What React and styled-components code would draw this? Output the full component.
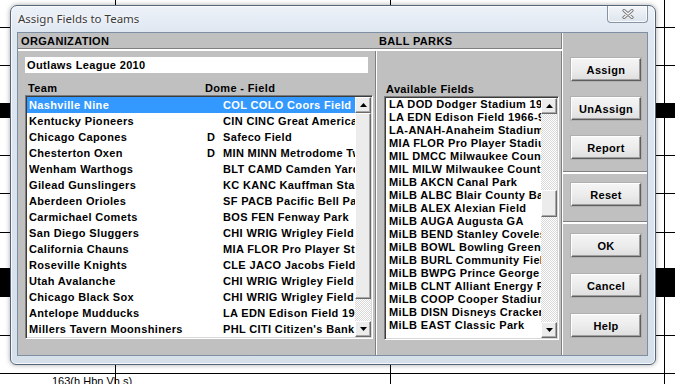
import React from "react";
import styled, { createGlobalStyle } from "styled-components";

const GlobalStyle = createGlobalStyle`
  html, body {
    margin: 0;
    padding: 0;
    background: #fff;
  }
  body {
    width: 675px;
    height: 384px;
    overflow: hidden;
    font-family: "Liberation Sans", Arial, sans-serif;
  }
`;

const teams = [
  { name: "Nashville Nine", dome: "", field: "COL COLO Coors Field", selected: true },
  { name: "Kentucky Pioneers", dome: "", field: "CIN CINC Great American Ball Park" },
  { name: "Chicago Capones", dome: "D", field: "Safeco Field" },
  { name: "Chesterton Oxen", dome: "D", field: "MIN MINN Metrodome Twins" },
  { name: "Wenham Warthogs", dome: "", field: "BLT CAMD Camden Yards" },
  { name: "Gilead Gunslingers", dome: "", field: "KC KANC Kauffman Stadium" },
  { name: "Aberdeen Orioles", dome: "", field: "SF PACB Pacific Bell Park" },
  { name: "Carmichael Comets", dome: "", field: "BOS FEN Fenway Park" },
  { name: "San Diego Sluggers", dome: "", field: "CHI WRIG Wrigley Field" },
  { name: "California Chauns", dome: "", field: "MIA FLOR Pro Player Stadium" },
  { name: "Roseville Knights", dome: "", field: "CLE JACO Jacobs Field" },
  { name: "Utah Avalanche", dome: "", field: "CHI WRIG Wrigley Field" },
  { name: "Chicago Black Sox", dome: "", field: "CHI WRIG Wrigley Field" },
  { name: "Antelope Mudducks", dome: "", field: "LA EDN Edison Field 1966-97" },
  { name: "Millers Tavern Moonshiners", dome: "", field: "PHL CITI Citizen's Bank Park" },
];

const parks = [
  "LA DOD Dodger Stadium 1962-",
  "LA EDN Edison Field 1966-97",
  "LA-ANAH-Anaheim Stadium",
  "MIA FLOR Pro Player Stadium",
  "MIL DMCC Milwaukee County Stadium",
  "MIL MILW Milwaukee County Stadium",
  "MiLB AKCN Canal Park",
  "MiLB ALBC Blair County Ballpark",
  "MiLB ALEX Alexian Field",
  "MiLB AUGA Augusta GA",
  "MiLB BEND Stanley Coveleski",
  "MiLB BOWL Bowling Green",
  "MiLB BURL Community Field",
  "MiLB BWPG Prince George",
  "MiLB CLNT Alliant Energy Field",
  "MiLB COOP Cooper Stadium",
  "MiLB DISN Disneys Cracker Jack",
  "MiLB EAST Classic Park",
];

// lines of the sheet lying behind the dialog
const hLines = [27, 65, 155, 193, 232, 335, 373];
const vLines = [115, 390, 664];

const Arrow = ({ down }) => (
  <svg width="7" height="4" viewBox="0 0 7 4">
    {down ? <polygon points="0,0 7,0 3.5,4" fill="#000" /> : <polygon points="0,4 7,4 3.5,0" fill="#000" />}
  </svg>
);

const CloseIcon = () => (
  <svg width="12" height="10" viewBox="0 0 12 10">
    <path d="M2 1.5 L10 8.5 M10 1.5 L2 8.5" stroke="#7a7a7a" strokeWidth="3.2" strokeLinecap="round" />
    <path d="M2 1.5 L10 8.5 M10 1.5 L2 8.5" stroke="#fafafa" strokeWidth="1.3" strokeLinecap="round" />
  </svg>
);

const ScrollBar = ({ before, thumb }) => (
  <Bar>
    <ArrowButton>
      <Arrow />
    </ArrowButton>
    <Track>
      <TrackGap $h={before} />
      <Thumb $h={thumb} />
    </Track>
    <ArrowButton>
      <Arrow down />
    </ArrowButton>
  </Bar>
);

const App = () => {
  return (
    <Page>
      <GlobalStyle />
      {hLines.map((y) => (
        <HLine key={y} $y={y} />
      ))}
      {vLines.map((x) => (
        <VLine key={x} $x={x} />
      ))}
      <Block $left={0} $y={103} $h={15} $w={10} />
      <Block $left={0} $y={268} $h={29} $w={10} />
      <Block $left={656} $y={103} $h={15} $w={19} />
      <Block $left={656} $y={268} $h={29} $w={19} />
      <SheetText>163(h Hbn Vh s)</SheetText>

      <Window>
        <TitleBar>
          <Title>Assign Fields to Teams</Title>
          <CloseButton>
            <CloseIcon />
          </CloseButton>
        </TitleBar>

        <Client>
          <Main>
            <HeaderRow>
              <HeaderCell $w={359} $pad={3}>ORGANIZATION</HeaderCell>
              <HeaderCell $pad={2}>BALL PARKS</HeaderCell>
            </HeaderRow>
            <Body>
              <OrgPanel>
                <OrgInput>Outlaws League 2010</OrgInput>
                <ColumnLabels>
                  <Label $w={175}>Team</Label>
                  <Label>Dome - Field</Label>
                </ColumnLabels>
                <ListBox $w={348}>
                  <Rows>
                    {teams.map((t) => (
                      <TeamRow key={t.name} $selected={t.selected}>
                        <Cell>{t.name}</Cell>
                        <Cell>{t.dome}</Cell>
                        <Cell>{t.field}</Cell>
                      </TeamRow>
                    ))}
                  </Rows>
                  <ScrollBar before={0} thumb={186} />
                </ListBox>
              </OrgPanel>

              <ParksPanel>
                <Label>Available Fields</Label>
                <ListBox $w={175}>
                  <Rows>
                    {parks.map((p) => (
                      <ParkRow key={p}>{p}</ParkRow>
                    ))}
                  </Rows>
                  <ScrollBar before={76} thumb={27} />
                </ListBox>
              </ParksPanel>
            </Body>
          </Main>

          <ButtonColumn>
            <ButtonGroup $h={139} $top={25} $gap={16}>
              <Button>Assign</Button>
              <Button>UnAssign</Button>
              <Button>Report</Button>
            </ButtonGroup>
            <ButtonGroup $h={50} $top={10} $gap={0} $divided>
              <Button>Reset</Button>
            </ButtonGroup>
            <ButtonGroup $top={11} $gap={17} $divided $grow>
              <Button>OK</Button>
              <Button>Cancel</Button>
              <Button>Help</Button>
            </ButtonGroup>
          </ButtonColumn>
        </Client>
      </Window>
    </Page>
  );
};

const Page = styled.div`
  position: relative;
  width: 675px;
  height: 384px;
  overflow: hidden;
  background: #fff;
`;

const HLine = styled.div`
  position: absolute;
  left: 0;
  right: 0;
  top: ${(p) => p.$y}px;
  height: 1px;
  background: #000;
`;

const VLine = styled.div`
  position: absolute;
  top: 0;
  bottom: 0;
  left: ${(p) => p.$x}px;
  width: 1px;
  background: #000;
`;

const Block = styled.div`
  position: absolute;
  left: ${(p) => p.$left}px;
  top: ${(p) => p.$y}px;
  width: ${(p) => p.$w}px;
  height: ${(p) => p.$h}px;
  background: #000;
`;

const SheetText = styled.div`
  position: absolute;
  left: 52px;
  top: 375px;
  font-size: 11px;
  color: #000;
  white-space: nowrap;
`;

const Window = styled.div`
  position: absolute;
  left: 10px;
  top: 5px;
  width: 646px;
  height: 360px;
  box-sizing: border-box;
  display: flex;
  flex-direction: column;
  border: 1px solid #56667a;
  border-radius: 7px 7px 6px 6px;
  background: linear-gradient(180deg, #edf2f8 0px, #dfe7f1 26px, #d6e0eb 100%);
  box-shadow: inset 0 0 0 1px rgba(255, 255, 255, 0.75), 0 0 5px rgba(0, 0, 0, 0.35);
`;

const TitleBar = styled.div`
  height: 26px;
  flex: none;
  display: flex;
  align-items: flex-start;
  justify-content: space-between;
  padding: 0 7px 0 7px;
`;

const Title = styled.div`
  margin-top: 5px;
  font-family: "Noto Sans", "Open Sans", sans-serif;
  font-size: 11.5px;
  line-height: 16px;
  color: #3a3a3a;
  text-shadow: 0 0 6px #fff, 0 0 3px #fff;
`;

const CloseButton = styled.div`
  width: 41px;
  height: 17px;
  box-sizing: border-box;
  display: flex;
  align-items: center;
  justify-content: center;
  border: 1px solid #8593a5;
  border-top: none;
  border-radius: 0 0 4px 4px;
  background: linear-gradient(180deg, #f3f6fa, #dde4ed);
  box-shadow: inset 0 0 0 1px rgba(255, 255, 255, 0.8);
`;

const Client = styled.div`
  flex: 1;
  display: flex;
  margin: 0 7px 8px 6px;
  border: 1px solid #7e8ea3;
  background: #c0c0c0;
  font-weight: 700;
  font-size: 11px;
  letter-spacing: 0.35px;
  color: #000;
`;

const Main = styled.div`
  width: 545px;
  box-sizing: border-box;
  display: flex;
  flex-direction: column;
  border-right: 1px solid #fff;
  box-shadow: inset -1px 0 0 #808080;
`;

const HeaderRow = styled.div`
  height: 16px;
  display: flex;
  align-items: center;
  border-bottom: 1px solid #fff;
  box-shadow: 0 1px 0 #fff, inset 0 -1px 0 #808080;
  margin-bottom: 1px;
`;

const HeaderCell = styled.div`
  width: ${(p) => (p.$w ? `${p.$w}px` : "auto")};
  padding-left: ${(p) => p.$pad}px;
  box-sizing: border-box;
  line-height: 16px;
`;

const Body = styled.div`
  flex: 1;
  display: flex;
`;

const OrgPanel = styled.div`
  width: 359px;
  box-sizing: border-box;
  padding: 6px 0 0 7px;
  border-right: 1px solid #fff;
  box-shadow: inset -1px 0 0 #808080;
  display: flex;
  flex-direction: column;
`;

const ParksPanel = styled.div`
  flex: 1;
  padding: 32px 0 0 7px;
  display: flex;
  flex-direction: column;
`;

const OrgInput = styled.div`
  width: 343px;
  height: 16px;
  box-sizing: border-box;
  padding-left: 2px;
  line-height: 16px;
  background: #fff;
`;

const ColumnLabels = styled.div`
  height: 22px;
  display: flex;
  align-items: flex-end;
  padding-left: 3px;
`;

const Label = styled.div`
  width: ${(p) => (p.$w ? `${p.$w}px` : "auto")};
  line-height: 13px;
  padding-left: ${(p) => (p.$w === undefined ? 2 : 0)}px;
`;

const ListBox = styled.div`
  width: ${(p) => p.$w}px;
  height: 244px;
  box-sizing: border-box;
  display: flex;
  background: #fff;
  border: 1px solid;
  border-color: #7c7c7c #fff #fff #7c7c7c;
  box-shadow: inset 1px 1px 0 #3c3c3c, inset -1px -1px 0 #d8d8d8;
  padding: 1px;
  overflow: hidden;
`;

const Rows = styled.div`
  flex: 1;
  min-width: 0;
  overflow: hidden;
`;

const TeamRow = styled.div`
  height: 16px;
  display: grid;
  grid-template-columns: 178px 16px 1fr;
  align-items: center;
  padding-left: 2px;
  white-space: nowrap;
  overflow: hidden;
  background: ${(p) => (p.$selected ? "#3399ff" : "transparent")};
  color: ${(p) => (p.$selected ? "#fff" : "#000")};
`;

const Cell = styled.span`
  overflow: hidden;
  white-space: nowrap;
`;

const ParkRow = styled.div`
  height: 13px;
  line-height: 13px;
  padding-left: 3px;
  white-space: nowrap;
  overflow: hidden;
`;

const Bar = styled.div`
  width: 16px;
  flex: none;
  display: flex;
  flex-direction: column;
`;

const raised = `
  box-sizing: border-box;
  background: #ececec;
  border: 1px solid;
  border-color: #fff #6a6a6a #6a6a6a #fff;
  box-shadow: inset -1px -1px 0 #a8a8a8;
`;

const ArrowButton = styled.div`
  ${raised}
  height: 16px;
  display: flex;
  align-items: center;
  justify-content: center;
`;

const Track = styled.div`
  flex: 1;
  display: flex;
  flex-direction: column;
  background-color: #fff;
  background-image: repeating-conic-gradient(#d8d8d8 0 25%, #fff 0 50%);
  background-size: 2px 2px;
`;

const TrackGap = styled.div`
  height: ${(p) => p.$h}px;
  flex: none;
`;

const Thumb = styled.div`
  ${raised}
  height: ${(p) => p.$h}px;
  flex: none;
`;

const ButtonColumn = styled.div`
  flex: 1;
  display: flex;
  flex-direction: column;
`;

const ButtonGroup = styled.div`
  height: ${(p) => (p.$h ? `${p.$h}px` : "auto")};
  flex: ${(p) => (p.$grow ? 1 : "none")};
  box-sizing: border-box;
  display: flex;
  flex-direction: column;
  gap: ${(p) => p.$gap}px;
  padding: ${(p) => p.$top}px 0 0 8px;
  border-top: ${(p) => (p.$divided ? "1px solid #fff" : "none")};
  box-shadow: ${(p) => (p.$divided ? "inset 0 1px 0 #fff, 0 -1px 0 #808080" : "none")};
`;

const Button = styled.div`
  width: 70px;
  height: 23px;
  box-sizing: border-box;
  display: flex;
  align-items: center;
  justify-content: center;
  background: linear-gradient(180deg, #f5f5f5 0%, #ebebeb 55%, #dedede 100%);
  border: 1px solid;
  border-color: #fff #5e5e5e #5e5e5e #fff;
  box-shadow: inset -1px -1px 0 #a0a0a0, 0 0 0 1px #b0b0b0;
`;

export default App;
